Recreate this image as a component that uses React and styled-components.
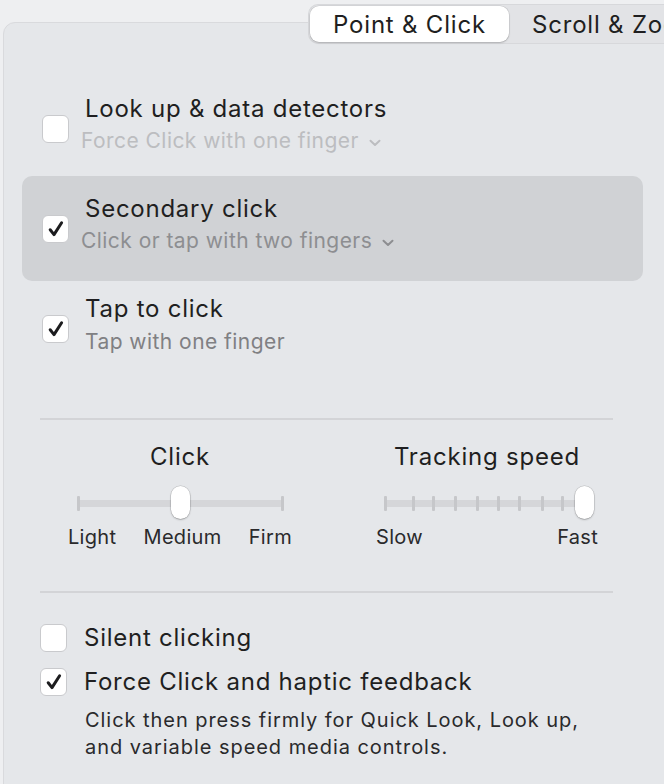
import React from "react";
import styled, { createGlobalStyle } from "styled-components";

const GlobalStyle = createGlobalStyle`
  html, body {
    margin: 0;
    padding: 0;
    background: #eeeff1;
    overflow: hidden;
  }
  body {
    font-family: Inter, "Noto Sans", "Liberation Sans", sans-serif;
    color: #262628;
    -webkit-font-smoothing: antialiased;
  }
`;

const Page = styled.div`
  width: 664px;
  height: 784px;
  overflow: hidden;
`;

const TabStrip = styled.div`
  position: relative;
  z-index: 1;
  display: flex;
  padding: 4px 0 0 308px;
  white-space: nowrap;
`;

const Segmented = styled.div`
  display: flex;
  flex-shrink: 0;
  height: 40px;
  box-sizing: border-box;
  padding: 1px;
  background: #e2e3e6;
  border: 1px solid #d7d8db;
  border-right: none;
  border-radius: 10px 0 0 10px;
`;

const Tab = styled.div`
  display: flex;
  align-items: center;
  justify-content: center;
  flex-shrink: 0;
  width: ${(p) => p.$width}px;
  height: 100%;
  font-size: 24px;
  letter-spacing: 0.8px;
  color: #1f1f21;
  background: ${(p) => (p.$active ? "#ffffff" : "transparent")};
  border-radius: 9px;
  box-shadow: ${(p) =>
    p.$active ? "0 0 0 0.5px rgba(0,0,0,0.12), 0 1px 2px rgba(0,0,0,0.18)" : "none"};
`;

const Panel = styled.div`
  margin: -22px 0 0 3px;
  width: 720px;
  min-height: 820px;
  box-sizing: border-box;
  padding: 53px 0 0 18px;
  background: #e5e7ea;
  border: 1px solid #d9dadd;
  border-radius: 12px;
`;

const Content = styled.div`
  width: 621px;
`;

const OptionRow = styled.div`
  display: flex;
  align-items: flex-start;
  gap: 16px;
  box-sizing: border-box;
  height: ${(p) => p.$height}px;
  padding: ${(p) => p.$top}px 20px 0;
  background: ${(p) => (p.$highlight ? "#d0d2d5" : "transparent")};
  border-radius: 10px;
`;

const Box = styled.div`
  flex-shrink: 0;
  width: 27px;
  height: 28px;
  margin-top: ${(p) => p.$offset || 0}px;
  box-sizing: border-box;
  background: #ffffff;
  border: 1px solid #c9cacd;
  border-radius: 6px;
  display: flex;
  align-items: center;
  justify-content: center;
`;

const TextBlock = styled.div`
  display: flex;
  flex-direction: column;
`;

const Title = styled.div`
  font-size: 24px;
  line-height: 32px;
  letter-spacing: 0.75px;
  color: #1f1f21;
  white-space: nowrap;
`;

const Subtitle = styled.div`
  display: flex;
  align-items: center;
  gap: 10px;
  margin-left: ${(p) => (p.$popup ? -4 : 0)}px;
  margin-top: ${(p) => p.$gap || 0}px;
  font-size: 21px;
  line-height: 32px;
  letter-spacing: 0.45px;
  color: ${(p) => p.$color};
  white-space: nowrap;
`;

const Divider = styled.div`
  margin: ${(p) => p.$top}px 0 0 18px;
  width: 573px;
  height: 2px;
  background: #d3d4d7;
`;

const SliderRow = styled.div`
  display: flex;
  gap: 71px;
  margin: 21px 0 0 40px;
`;

const SliderColumn = styled.div`
  width: 236px;
  display: flex;
  flex-direction: column;
  align-items: center;
`;

const SliderTitle = styled.div`
  font-size: 24px;
  line-height: 32px;
  letter-spacing: 0.8px;
  color: #1f1f21;
`;

const TrackArea = styled.div`
  position: relative;
  width: 206px;
  height: 36px;
  margin-top: 12px;
  display: flex;
  align-items: center;
`;

const Track = styled.div`
  width: 100%;
  height: 7px;
  background: #d5d6d9;
  border-radius: 3px;
`;

const Tick = styled.div`
  position: absolute;
  top: 11px;
  width: 3px;
  height: 15px;
  margin-left: -1px;
  background: #c6c7ca;
  border-radius: 1px;
`;

const Thumb = styled.div`
  position: absolute;
  top: 1px;
  width: 19px;
  height: 33px;
  margin-left: -9px;
  background: #ffffff;
  border-radius: 10px;
  box-shadow: 0 0 0 0.5px rgba(0, 0, 0, 0.18), 0 1px 2px rgba(0, 0, 0, 0.22);
`;

const Labels = styled.div`
  display: flex;
  justify-content: space-between;
  width: ${(p) => p.$width}px;
  margin-top: 3px;
  font-size: 20px;
  line-height: 26px;
  letter-spacing: 0.3px;
  color: #2a2a2c;
`;

const Bottom = styled.div`
  padding-left: 18px;
`;

const CheckLine = styled.div`
  display: flex;
  align-items: center;
  gap: 17px;
  margin-top: ${(p) => p.$top}px;
`;

const Description = styled.div`
  margin: 9px 0 0 45px;
  font-size: 20px;
  line-height: 27px;
  letter-spacing: 0.95px;
  color: #2a2a2c;
  white-space: nowrap;
`;

const Check = () => (
  <svg width="18" height="18" viewBox="0 0 18 18">
    <path
      d="M3.2 9.8 L7 14.6 L14.6 2.8"
      fill="none"
      stroke="#1c1c1e"
      strokeWidth="3"
      strokeLinecap="round"
      strokeLinejoin="round"
    />
  </svg>
);

const Chevron = ({ color }) => (
  <svg width="12" height="8" viewBox="0 0 12 8" style={{ marginTop: 4 }}>
    <path
      d="M1.5 1.8 L6 6 L10.5 1.8"
      fill="none"
      stroke={color}
      strokeWidth="2"
      strokeLinecap="round"
      strokeLinejoin="round"
    />
  </svg>
);

const Checkbox = ({ checked, offset }) => (
  <Box $offset={offset}>{checked && <Check />}</Box>
);

const Slider = ({ ticks, value }) => (
  <TrackArea>
    <Track />
    {ticks.map((t) => (
      <Tick key={t} style={{ left: t }} />
    ))}
    <Thumb style={{ left: value }} />
  </TrackArea>
);

const options = [
  {
    title: "Look up & data detectors",
    sub: "Force Click with one finger",
    color: "#bcbdc0",
    popup: true,
    checked: false,
    height: 100,
    top: 17,
  },
  {
    title: "Secondary click",
    sub: "Click or tap with two fingers",
    color: "#8d8e91",
    popup: true,
    checked: true,
    highlight: true,
    height: 105,
    top: 17,
  },
  {
    title: "Tap to click",
    sub: "Tap with one finger",
    color: "#808083",
    popup: false,
    checked: true,
    height: 100,
    top: 12,
    gap: 1,
  },
];

export default function App() {
  return (
    <Page>
      <GlobalStyle />
      <TabStrip>
        <Segmented>
          <Tab $active $width={199}>
            Point &amp; Click
          </Tab>
          <Tab $width={214}>Scroll &amp; Zoom</Tab>
        </Segmented>
      </TabStrip>
      <Panel>
        <Content>
          {options.map((o) => (
            <OptionRow
              key={o.title}
              $height={o.height}
              $top={o.top}
              $highlight={o.highlight}
            >
              <Checkbox checked={o.checked} offset={22} />
              <TextBlock>
                <Title>{o.title}</Title>
                <Subtitle $color={o.color} $popup={o.popup} $gap={o.gap}>
                  {o.sub}
                  {o.popup && <Chevron color={o.color} />}
                </Subtitle>
              </TextBlock>
            </OptionRow>
          ))}

          <Divider $top={37} />

          <SliderRow>
            <SliderColumn>
              <SliderTitle>Click</SliderTitle>
              <Slider ticks={[1, 205]} value={103} />
              <Labels $width={224}>
                <span>Light</span>
                <span>Medium</span>
                <span>Firm</span>
              </Labels>
            </SliderColumn>
            <SliderColumn>
              <SliderTitle>Tracking speed</SliderTitle>
              <Slider
                ticks={[1, 29, 49, 71, 93, 114, 135, 158, 178]}
                value={200}
              />
              <Labels $width={222}>
                <span>Slow</span>
                <span>Fast</span>
              </Labels>
            </SliderColumn>
          </SliderRow>

          <Divider $top={41} />

          <Bottom>
            <CheckLine $top={29}>
              <Checkbox checked={false} />
              <Title>Silent clicking</Title>
            </CheckLine>
            <CheckLine $top={12}>
              <Checkbox checked />
              <Title>Force Click and haptic feedback</Title>
            </CheckLine>
            <Description>
              Click then press firmly for Quick Look, Look up,
              <br />
              and variable speed media controls.
            </Description>
          </Bottom>
        </Content>
      </Panel>
    </Page>
  );
}
